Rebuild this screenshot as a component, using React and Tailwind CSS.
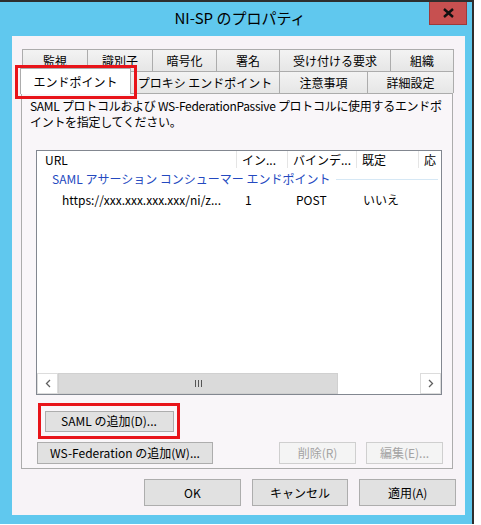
import React from "react";

const font = { fontFamily: '"Noto Sans CJK JP", "Noto Sans", sans-serif' };

function Tab({ label, w, selected, first }) {
  if (selected) {
    return (
      <div
        className={`relative z-10 -mt-[3px] -mb-px h-[26px] bg-white border border-b-0 border-[#acacac] flex items-center justify-center text-[12px] text-black ${first ? "-ml-[2px]" : "-ml-px"}`}
        style={{ width: w }}
      >
        {label}
      </div>
    );
  }
  return (
    <div
      className={`h-[22px] bg-gradient-to-b from-[#f3f3f3] to-[#e6e6e6] border border-b-0 border-[#acacac] flex items-center justify-center text-[12px] leading-[16px] text-black ${first ? "" : "-ml-px"}`}
      style={{ width: w }}
    >
      {label}
    </div>
  );
}

function Btn({ children, className = "", disabled }) {
  return (
    <div
      className={`flex items-center justify-center border text-[12px] ${
        disabled
          ? "bg-[#f4f4f4] border-[#cfcfcf] text-[#a3a3a3]"
          : "bg-[#e1e1e1] border-[#adadad] text-black"
      } ${className}`}
    >
      {children}
    </div>
  );
}

export default function App() {
  return (
    <div className="relative w-[481px] h-[525px] bg-white overflow-hidden" style={font}>
      <div className="w-[474px] h-[524px] bg-[#60c8ee] border-t-2 border-r-2 border-[#2e2e2e] flex flex-col">
        {/* title bar */}
        <div className="relative h-[34px] flex items-center justify-center text-[15px] text-black">
          <span className="pl-[8px] pb-[2px]">NI-SP のプロパティ</span>
          <div className="absolute right-[5px] top-0 w-[38px] h-[23px] bg-[#c75050] border border-t-0 border-[#9e3a3a] flex items-center justify-center">
            <svg width="11" height="10" viewBox="0 0 11 10">
              <path d="M1 1 L10 9 M10 1 L1 9" stroke="#111" strokeWidth="2.4" />
            </svg>
          </div>
        </div>

        {/* client area */}
        <div className="ml-[12px] w-[453px] h-[479px] bg-[#f7f3f7] flex flex-col pt-[13px] px-[9px]">
          {/* tab rows */}
          <div className="flex ml-[1px]">
            <Tab first label="監視" w={66} />
            <Tab label="識別子" w={66} />
            <Tab label="暗号化" w={65} />
            <Tab label="署名" w={64} />
            <Tab label="受け付ける要求" w={112} />
            <Tab label="組織" w={64} />
          </div>
          <div className="flex ml-[1px]">
            <Tab first selected label="エンドポイント" w={111} />
            <Tab label="プロキシ エンドポイント" w={150} />
            <Tab label="注意事項" w={89} />
            <Tab label="詳細設定" w={87} />
          </div>

          {/* panel */}
          <div className="relative w-[432px] h-[376px] border border-[#acacac] bg-[#f9f6f9] flex flex-col px-[8px] pt-[4px]">
            <div className="text-[12px] leading-[16px] text-black whitespace-nowrap tracking-[-0.3px]">
              <div>SAML プロトコルおよび WS-FederationPassive プロトコルに使用するエンドポ</div>
              <div>イントを指定してください。</div>
            </div>

            {/* list view */}
            <div className="mt-[20px] ml-[6px] w-[406px] h-[245px] border border-[#828790] bg-white flex flex-col text-[12px] text-black">
              <div className="flex h-[17px] items-center">
                <div className="w-[200px] h-full pl-[8px] flex items-center border-r border-[#e5e5e5]">URL</div>
                <div className="w-[51px] h-full pl-[5px] flex items-center border-r border-[#e5e5e5]">イン...</div>
                <div className="w-[69px] h-full pl-[5px] flex items-center border-r border-[#e5e5e5]">バインデ...</div>
                <div className="w-[62px] h-full pl-[5px] flex items-center border-r border-[#e5e5e5]">既定</div>
                <div className="flex-1 h-full pl-[5px] flex items-center overflow-hidden">応</div>
              </div>
              <div className="flex items-center h-[22px] pl-[15px] pr-[3px]">
                <span className="text-[#2449c0] whitespace-nowrap">SAML アサーション コンシューマー エンドポイント</span>
                <div className="flex-1 ml-[5px] h-px bg-[#d6e8f5]" />
              </div>
              <div className="flex items-center h-[20px]">
                <div className="w-[201px] pl-[25px] whitespace-nowrap">https://xxx.xxx.xxx.xxx/ni/z...</div>
                <div className="w-[51px] pl-[7px]">1</div>
                <div className="w-[69px] pl-[7px]">POST</div>
                <div className="w-[62px] pl-[5px]">いいえ</div>
              </div>
              <div className="flex-1" />
              {/* horizontal scrollbar */}
              <div className="flex h-[21px] bg-white">
                <div className="w-[21px] h-full border border-[#dcdcdc] bg-white flex items-center justify-center">
                  <svg width="6" height="9" viewBox="0 0 6 9"><path d="M5 1 L1.5 4.5 L5 8" stroke="#606060" strokeWidth="1.3" fill="none" /></svg>
                </div>
                <div className="w-[280px] h-full bg-[#dadada] border border-[#d0d0d0] flex items-center justify-center">
                  <div className="flex gap-[2px]">
                    <div className="w-px h-[7px] bg-[#555]" />
                    <div className="w-px h-[7px] bg-[#555]" />
                    <div className="w-px h-[7px] bg-[#555]" />
                  </div>
                </div>
                <div className="flex-1" />
                <div className="w-[21px] h-full border border-[#dcdcdc] bg-white flex items-center justify-center">
                  <svg width="6" height="9" viewBox="0 0 6 9"><path d="M1 1 L4.5 4.5 L1 8" stroke="#606060" strokeWidth="1.3" fill="none" /></svg>
                </div>
              </div>
            </div>

            {/* buttons */}
            <div className="mt-[8px] ml-[8px] w-[142px] h-[36px] border-[3px] border-[#e8141a] flex items-center justify-center">
              <Btn className="w-[129px] h-[21px]">SAML の追加(D)...</Btn>
            </div>
            <div className="mt-[3px] ml-[7px] flex">
              <Btn className="w-[176px] h-[22px]">WS-Federation の追加(W)...</Btn>
              <Btn disabled className="ml-[66px] w-[77px] h-[22px]">削除(R)</Btn>
              <Btn disabled className="ml-[10px] w-[77px] h-[22px]">編集(E)...</Btn>
            </div>
          </div>

          {/* dialog buttons */}
          <div className="mt-[10px] ml-[123px] flex gap-[11px]">
            <Btn className="w-[97px] h-[27px]">OK</Btn>
            <Btn className="w-[97px] h-[27px]">キャンセル</Btn>
            <Btn className="w-[97px] h-[27px]">適用(A)</Btn>
          </div>
        </div>
      </div>
      {/* red highlight around selected tab */}
      <div className="absolute left-[15px] top-[65px] w-[122px] h-[34px] border-[3px] border-[#e8141a] z-20 pointer-events-none" />
    </div>
  );
}
